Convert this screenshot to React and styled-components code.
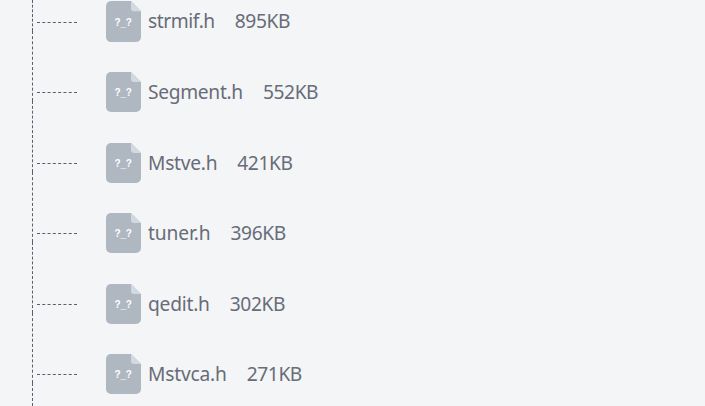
import * as React from "react"
import styled, { createGlobalStyle } from "styled-components"

const GlobalStyle = createGlobalStyle`
  body {
    margin: 0;
    background: #f3f5f7;
    overflow: hidden;
  }
`

const Tree = styled.ul`
  list-style: none;
  margin: 0;
  padding: 0 0 0 32px;
  height: 406px;
  overflow: hidden;
  box-sizing: border-box;
`

const Node = styled.li`
  display: flex;
  align-items: flex-end;
  box-sizing: border-box;
  height: ${(p) => p.$height}px;
  border-left: 1px dashed #58606f;
  padding: 0 0 7px 4px;
`

const Branch = styled.span`
  width: 40px;
  border-top: 1px dashed #58606f;
  margin: 0 29px 1px 0;
`

// the row hangs below the node so the branch meets the middle of the icon
const Row = styled.div`
  display: flex;
  align-items: center;
  height: ${(p) => p.$icon + 1}px;
  margin-bottom: -18px;
`

const FileIcon = styled.svg`
  display: block;
  width: 35px;
  height: ${(p) => p.$icon}px;
  margin-right: 7px;
`

const Label = styled.span`
  font: 19.2px/28px "Noto Sans", sans-serif;
  letter-spacing: ${(p) => p.$spacing}px;
  color: #686c77;
  white-space: pre;
`

const Size = styled(Label)`
  margin-left: 20px;
`

const Tail = styled.div`
  height: 23px;
  border-left: 1px dashed #58606f;
`

const files = [
  { name: "strmif.h", size: "895KB", height: 31, spacing: -0.42, icon: 41 },
  { name: "Segment.h", size: "552KB", height: 70, spacing: -0.31, icon: 40 },
  { name: "Mstve.h", size: "421KB", height: 71, spacing: -0.26, icon: 40 },
  { name: "tuner.h", size: "396KB", height: 70, spacing: -0.12, icon: 40 },
  { name: "qedit.h", size: "302KB", height: 71, spacing: -0.22, icon: 40 },
  { name: "Mstvca.h", size: "271KB", height: 70, spacing: -0.2, icon: 40 },
]

function UnknownFile({ icon }) {
  return (
    <FileIcon $icon={icon} viewBox="0 0 35 40" preserveAspectRatio="none">
      <path d="M5 0H25L35 10V35a5 5 0 0 1-5 5H5a5 5 0 0 1-5-5V5a5 5 0 0 1 5-5Z" fill="#afb7c1" />
      <path d="M25 0L35 10H28a3 3 0 0 1-3-3Z" fill="#d2d9e1" />
      <text x="17.2" y="24" textAnchor="middle" fontFamily="Liberation Sans, sans-serif" fontSize="10" fontWeight="700" letterSpacing="-0.2" fill="#fff">
        ?_?
      </text>
    </FileIcon>
  )
}

export default function FileTree() {
  return (
    <>
      <GlobalStyle />
      <Tree>
        {files.map((f) => (
          <Node key={f.name} $height={f.height}>
            <Branch />
            <Row $icon={f.icon}>
              <UnknownFile icon={f.icon} />
              <Label $spacing={f.spacing}>{f.name}</Label>
              <Size $spacing={-0.4}>{f.size}</Size>
            </Row>
          </Node>
        ))}
        <Tail />
      </Tree>
    </>
  )
}
